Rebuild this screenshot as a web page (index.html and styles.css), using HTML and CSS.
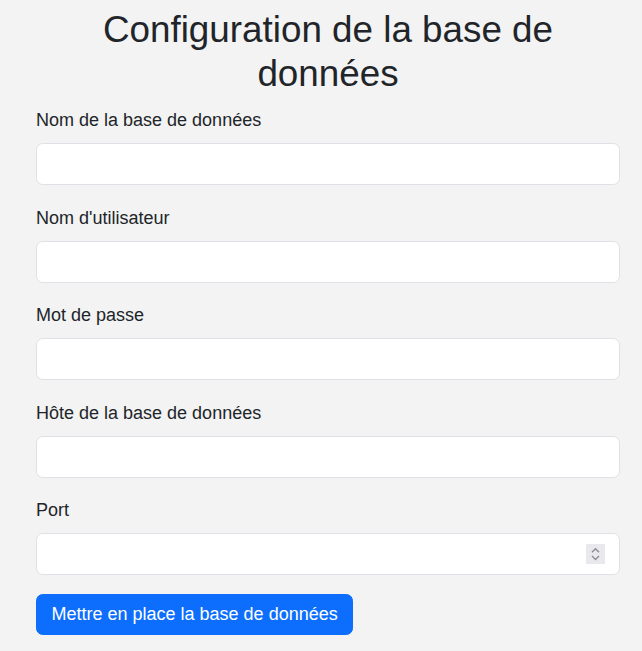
FILE: index.html
```html
<!DOCTYPE html>
<html lang="fr">
<head>
<meta charset="utf-8">
<title>Configuration de la base de données</title>
<link rel="stylesheet" href="styles.css">
</head>
<body>
<main class="page">
  <h1 class="title">Configuration de la base de données</h1>
  <form class="setup-form">
    <div class="field">
      <label class="field-label" for="dbname">Nom de la base de données</label>
      <input class="field-input" type="text" id="dbname">
    </div>
    <div class="field">
      <label class="field-label" for="dbuser">Nom d'utilisateur</label>
      <input class="field-input" type="text" id="dbuser">
    </div>
    <div class="field">
      <label class="field-label" for="dbpass">Mot de passe</label>
      <input class="field-input" type="password" id="dbpass">
    </div>
    <div class="field">
      <label class="field-label" for="dbhost">Hôte de la base de données</label>
      <input class="field-input" type="text" id="dbhost">
    </div>
    <div class="field field-last">
      <label class="field-label" for="dbport">Port</label>
      <div class="number-wrap">
        <input class="field-input number-input" type="number" id="dbport">
        <span class="spinner" aria-hidden="true">
          <svg width="19" height="20" viewBox="0 0 19 20">
            <polyline points="6,8.2 9.5,4.8 13,8.2" fill="none" stroke="#8c8c98" stroke-width="1.4"/>
            <polyline points="6,12 9.5,15.4 13,12" fill="none" stroke="#8c8c98" stroke-width="1.4"/>
          </svg>
        </span>
      </div>
    </div>
    <button class="submit-btn" type="submit">Mettre en place la base de données</button>
  </form>
</main>
</body>
</html>
```
FILE: styles.css
```css
html, body {
  margin: 0;
  padding: 0;
  background: #f3f3f3;
}
body {
  font-family: "Liberation Sans", Arial, sans-serif;
  color: #212529;
  font-size: 18px;
  line-height: 1.5;
}
.page {
  padding: 8px 22px 0 36px;
}
.title {
  margin: 0 0 10.7px;
  font-size: 36.8px;
  font-weight: 400;
  line-height: 1.2;
  text-align: center;
}
.setup-form {
  display: flex;
  flex-direction: column;
  align-items: flex-start;
}
.field {
  display: flex;
  flex-direction: column;
  align-self: stretch;
  margin-bottom: 19.5px;
}
.field-last {
  margin-bottom: 19px;
}
.field-label {
  display: block;
  font-size: 18px;
  line-height: 27px;
  margin-bottom: 9px;
}
.field-input {
  box-sizing: border-box;
  width: 100%;
  height: 42px;
  padding: 6.5px 13.5px;
  font-family: inherit;
  font-size: 18px;
  line-height: 27px;
  color: #212529;
  background: #fff;
  border: 1px solid #dee2e6;
  border-radius: 6.75px;
  outline: none;
}
.number-wrap {
  position: relative;
  display: flex;
}
.number-input {
  -moz-appearance: textfield;
  appearance: textfield;
}
.number-input::-webkit-inner-spin-button,
.number-input::-webkit-outer-spin-button {
  -webkit-appearance: none;
  margin: 0;
}
.spinner {
  position: absolute;
  top: 10.5px;
  right: 15px;
  width: 19px;
  height: 20px;
  background: #e9e9ed;
  display: flex;
}
.submit-btn {
  box-sizing: border-box;
  height: 41px;
  padding: 6px 14.5px;
  font-family: inherit;
  font-size: 18px;
  line-height: 27px;
  color: #fff;
  background: #0d6efd;
  border: 1px solid #0d6efd;
  border-radius: 6.75px;
  cursor: pointer;
}
```
